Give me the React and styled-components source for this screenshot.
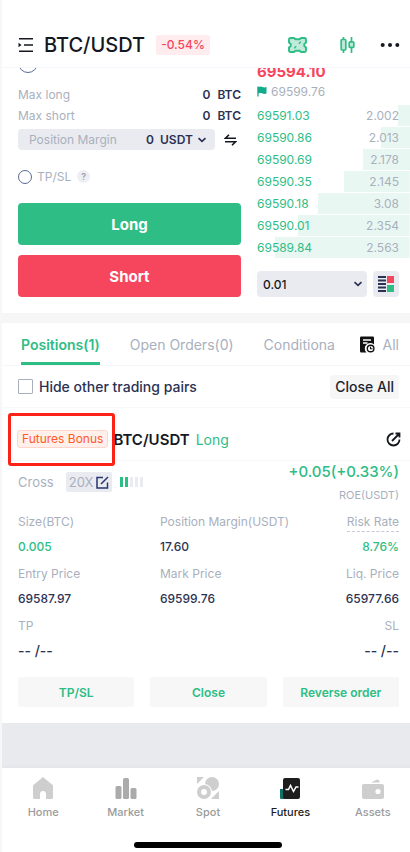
import React from 'react';
import styled, { createGlobalStyle } from 'styled-components';

const GREEN = '#2ebd85';
const RED = '#f6465d';
const NAVY = '#2b3253';
const GREY = '#a9b0bd';

const GlobalStyle = createGlobalStyle`
  * {
    box-sizing: border-box;
  }

  body {
    margin: 0;
    background: #f7f7f7;
    color: ${NAVY};
    font-family: Inter, 'Open Sans', sans-serif;
    font-size: 13px;
  }

  button,
  input,
  select {
    font-family: inherit;
    margin: 0;
  }

  button {
    border: none;
    padding: 0;
    cursor: pointer;
  }
`;

const Page = styled.div`
  display: flex;
  flex-direction: column;
  min-height: 100vh;
  overflow: hidden;
  border-left: 2px solid #f7f7f7;
  background: #e9eaee;
`;

/* Header */
const Header = styled.header`
  display: flex;
  align-items: center;
  height: 68px;
  padding: 22px 10px 0 16px;
  background: #fff;
  border-bottom: 1px solid #f5f6fc;
`;

const Pair = styled.h1`
  margin: 0 11px 0 10px;
  font-size: 20px;
  line-height: 28px;
  font-weight: 500;
  color: #15181f;
`;

const Change = styled.span`
  padding: 0 5px;
  border-radius: 2px;
  background: #feecef;
  color: ${RED};
  font-size: 12px;
  line-height: 20px;
  font-weight: 500;
`;

const HeaderActions = styled.div`
  display: flex;
  align-items: center;
  gap: 25px;
  margin-left: auto;

  button:first-child {
    margin-right: 8px;
  }
`;

const IconButton = styled.button`
  display: flex;
  align-items: center;
  justify-content: center;
  background: none;
  color: #15181f;
`;

/* Order form and order book */
const Trade = styled.section`
  display: grid;
  grid-template-columns: 223fr 153fr;
  gap: 16px;
  padding: 0 0 16px 16px;
  overflow: hidden;
  background: #fff;
`;

const Form = styled.form`
  display: flex;
  flex-direction: column;
`;

const Radio = styled.input`
  appearance: none;
  flex: none;
  width: ${(p) => (p.$large ? 20 : 14)}px;
  height: ${(p) => (p.$large ? 20 : 14)}px;
  border: 1px solid #5a6996;
  border-radius: 50%;
  background: #fff;
`;

const TypeRow = styled.div`
  display: flex;
  height: 31px;
  margin-top: -15px;
`;

const MaxRow = styled.div`
  display: flex;
  justify-content: space-between;
  line-height: 21px;
  color: ${GREY};
  font-size: 12px;

  b {
    color: ${NAVY};
    font-weight: 600;
  }

  span {
    margin-left: 4px;
  }
`;

const MarginRow = styled.div`
  display: flex;
  align-items: center;
  justify-content: space-between;
  gap: 9px;
  padding-right: 4px;
  margin-top: 3px;
`;

const MarginBox = styled.label`
  display: flex;
  align-items: center;
  flex: 1;
  height: 21px;
  padding: 0 8px 0 11px;
  border-radius: 4px;
  background: #eaebf0;
  color: ${GREY};
  font-size: 12px;

  b {
    margin-left: auto;
    color: ${NAVY};
    font-weight: 600;
  }
`;

const SelectWrap = styled.span`
  display: flex;
  align-items: center;
  justify-content: space-between;
  gap: 4px;
  flex: ${(p) => (p.$wide ? 1 : 'none')};
  margin-left: ${(p) => (p.$wide ? 0 : 6)}px;
`;

const Select = styled.select`
  appearance: none;
  flex: ${(p) => (p.$wide ? 1 : 'none')};
  padding: 0;
  border: none;
  background: none;
  color: ${(p) => (p.$wide ? '#15181f' : NAVY)};
  font-size: 12px;
  font-weight: ${(p) => (p.$wide ? 500 : 600)};
`;

const TpslRow = styled.div`
  display: flex;
  align-items: center;
  height: 53px;
  color: ${GREY};
  font-size: 12px;

  label {
    margin: 0 6px 0 5px;
  }
`;

const Help = styled.button`
  width: 13px;
  height: 13px;
  border-radius: 50%;
  background: #eeeff4;
  color: #9aa1b3;
  font-size: 9px;
  line-height: 13px;
  font-weight: 600;
`;

const OrderButton = styled.button`
  height: 42px;
  margin-top: ${(p) => (p.$short ? 10 : 0)}px;
  border-radius: 4px;
  background: ${(p) => (p.$short ? RED : GREEN)};
  color: #fff;
  font-size: 15px;
  font-weight: 700;
`;

const Book = styled.div`
  display: flex;
  flex-direction: column;
`;

const LastPrice = styled.strong`
  margin-top: -6px;
  color: ${RED};
  font-size: 15px;
  line-height: 20px;
  font-weight: 700;
`;

const MarkPrice = styled.div`
  display: flex;
  align-items: center;
  gap: 4px;
  height: 23px;
  padding-bottom: 4px;
  color: ${GREY};
  font-size: 12px;
`;

const Bids = styled.ul`
  margin: 0;
  padding: 0;
  list-style: none;
`;

const Bid = styled.li`
  display: flex;
  justify-content: space-between;
  margin-bottom: 1px;
  padding-right: 11px;
  background: linear-gradient(#e9f7f2, #e9f7f2) right / ${(p) => p.$depth}% 100% no-repeat;
  color: ${GREEN};
  font-size: 12px;
  line-height: 21px;

  span:last-child {
    color: ${GREY};
  }
`;

const BookFooter = styled.div`
  display: flex;
  gap: 6px;
  margin: 12px 11px 0 0;
`;

const StepBox = styled.div`
  display: flex;
  flex: 1;
  height: 26px;
  padding: 0 4px 0 6px;
  border-radius: 4px;
  background: #eaebf0;
`;

const LayoutButton = styled(IconButton)`
  width: 26px;
  height: 26px;
  border-radius: 4px;
  background: #eaebf0;
`;

/* Positions */
const Panel = styled.section`
  border-top: 10px solid #f6f6f7;
  background: #fff;
`;

const Tabs = styled.div`
  display: flex;
  align-items: stretch;
  height: 43px;
  padding: 0 11px 0 19px;
  border-bottom: 1px solid #f5f6fa;
`;

const TabList = styled.div`
  display: flex;
  flex: 1;
  gap: 30px;
  min-width: 0;
  overflow: hidden;
  white-space: nowrap;
`;

const Tab = styled.button`
  flex: none;
  border-top: 3px solid transparent;
  border-bottom: 3px solid ${(p) => (p.$active ? GREEN : 'transparent')};
  background: none;
  color: ${(p) => (p.$active ? GREEN : GREY)};
  font-size: 14px;
  font-weight: ${(p) => (p.$active ? 600 : 400)};
`;

const History = styled(IconButton)`
  gap: 8px;
  margin-left: 18px;
  color: ${GREY};
  font-size: 14px;
`;

const FilterRow = styled.div`
  display: flex;
  align-items: center;
  justify-content: space-between;
  height: 42px;
  padding: 0 11px 0 16px;
  border-bottom: 1px solid #f7f8fb;

  label {
    display: flex;
    align-items: center;
    gap: 6px;
    font-size: 14px;
    font-weight: 500;
  }
`;

const Checkbox = styled.input`
  appearance: none;
  width: 15px;
  height: 15px;
  border: 1px solid #a9b0bd;
  border-radius: 1px;
`;

const CloseAll = styled.button`
  height: 24px;
  padding: 0 5px;
  border-radius: 3px;
  background: #f6f6f7;
  color: #22252e;
  font-size: 14px;
  font-weight: 500;
`;

const PositionHead = styled.div`
  display: flex;
  align-items: center;
  height: 53px;
  padding: 10px 9px 0 6px;
  border-bottom: 1px solid #f7f8fb;

  h2 {
    margin: 0 6px 0 -2px;
    color: #15181f;
    font-size: 15px;
    font-weight: 600;
  }

  button {
    margin-left: auto;
  }
`;

const Side = styled.span`
  color: ${GREEN};
  font-size: 14px;
`;

const Highlight = styled.div`
  position: relative;
  z-index: 1;
  display: flex;
  align-items: center;
  flex: none;
  height: 53px;
  padding: 0 4px 0 6px;
  border: 3px solid #fb2318;
  border-radius: 3px;
`;

const Bonus = styled.span`
  padding: 0 4px;
  border: 1px solid #ffd6c9;
  border-radius: 3px;
  background: #fff0ec;
  color: #ff5a26;
  font-size: 12px;
  line-height: 16px;
`;

const Leverage = styled.div`
  display: flex;
  justify-content: space-between;
  height: 49px;
  padding: 0 11px 0 16px;
`;

const Mode = styled.div`
  display: flex;
  align-items: center;
  height: 42px;
  color: ${GREY};
`;

const LeverageButton = styled(IconButton)`
  gap: 3px;
  height: 20px;
  margin: 0 8px 0 12px;
  padding: 0 3px;
  border-radius: 2px;
  background: #eaebf0;
  color: ${GREY};
  font-size: 13px;
`;

const RiskBars = styled.div`
  display: flex;
  gap: 2px;
`;

const RiskBar = styled.i`
  width: 3px;
  height: 10px;
  background: ${(p) => (p.$on ? GREEN : '#eaebf0')};
`;

const Pnl = styled.div`
  display: flex;
  flex-direction: column;
  align-items: flex-end;
  color: ${GREY};
  font-size: 11px;
  line-height: 24px;

  strong {
    color: ${GREEN};
    font-size: 15px;
    font-weight: 500;
    line-height: 22px;
  }
`;

const Stats = styled.dl`
  display: grid;
  grid-template-columns: 142fr 142fr 97fr;
  row-gap: 4px;
  margin: 0;
  padding: 1px 11px 0 16px;
`;

const Stat = styled.div`
  display: flex;
  flex-direction: column;
  align-items: ${(p) => (p.$end ? 'flex-end' : 'flex-start')};
  grid-column: ${(p) => p.$column || 'auto'};
  white-space: nowrap;

  dt {
    height: 21px;
    margin-bottom: 3px;
    border-bottom: 1px dashed ${(p) => (p.$hint ? '#c6cad4' : 'transparent')};
    color: ${GREY};
    font-size: 12px;
    line-height: 22px;
  }

  dd {
    margin: 0;
    color: ${(p) => (p.$green ? GREEN : NAVY)};
    font-size: ${(p) => (p.$large ? 14 : 12)}px;
    font-weight: 500;
    line-height: 24px;
  }
`;

const Actions = styled.div`
  display: grid;
  grid-template-columns: repeat(3, 1fr);
  gap: 16px;
  padding: 14px 11px 16px 16px;
`;

const Action = styled.button`
  height: 30px;
  border-radius: 2px;
  background: #f7f7f7;
  color: ${GREEN};
  font-size: 12px;
  font-weight: 600;
  white-space: nowrap;
`;

/* Bottom navigation */
const Footer = styled.footer`
  margin: auto -4px 0 0;
  padding-bottom: 4px;
  background: #fff;
  box-shadow: 0 -1px 3px #dfe2e8;
`;

const Nav = styled.nav`
  display: grid;
  grid-template-columns: repeat(5, 1fr);
  height: 74px;
  padding-top: 8px;
`;

const NavItem = styled.a`
  display: flex;
  flex-direction: column;
  align-items: center;
  gap: 4px;
  color: ${(p) => (p.$active ? '#1c1d21' : '#9b9b9b')};
  font-size: 11px;
  font-weight: 500;
  line-height: 16px;
  text-decoration: none;
`;

const HomeBar = styled.div`
  width: 36%;
  height: 6px;
  margin: 0 auto;
  border-radius: 3px;
  background: #000;
`;

function Chevron() {
  return (
    <svg width="10" height="8" viewBox="0 0 10 8" fill="none" stroke={NAVY} strokeWidth="1.7">
      <path d="M1.5 2.2 5 5.4l3.5-3.2" />
    </svg>
  );
}

function MenuIcon() {
  return (
    <svg width="16" height="16" viewBox="0 0 16 16" fill="none" stroke="#15181f" strokeWidth="1.4">
      <path d="M1 1.7h14M6 8h9M1 14.3h14" />
      <path d="M.5 5.8 3.500 8 .5 10.2z" fill="#15181f" stroke="none" />
    </svg>
  );
}

function TicketIcon() {
  return (
    <svg width="19" height="16" viewBox="0 0 19 16" fill="#c0ebda" stroke={GREEN} strokeWidth="1.9" strokeLinejoin="round">
      <path d="M2.500 1h3.500l1.500 1.300h4L13 1h3.500A1.500 1.500 0 0 1 18 2.500v3L16.300 7v2l1.700 1.500v3a1.500 1.500 0 0 1-1.500 1.500H13l-1.500-1.300h-4L6 15H2.500A1.500 1.500 0 0 1 1 13.500v-3L2.700 9V7L1 5.500v-3A1.500 1.500 0 0 1 2.500 1z" />
      <path d="m6.200 11.200 2-2M10.800 6.800l2-2" strokeWidth="1.300" />
    </svg>
  );
}

function CandlesIcon() {
  return (
    <svg width="15" height="16" viewBox="0 0 15 16" fill="#c0ebda" stroke={GREEN} strokeWidth="1.7">
      <path d="M3.5 0v16M11.5 0v16" />
      <rect x="1.2" y="2.5" width="4.6" height="10.5" rx="1" />
      <rect x="9.2" y="4.8" width="4.6" height="5.6" rx="1" />
    </svg>
  );
}

function DotsIcon() {
  return (
    <svg width="20" height="6" viewBox="0 0 20 6" fill="#15181f">
      <circle cx="2.7" cy="3" r="2" />
      <circle cx="10" cy="3" r="2" />
      <circle cx="17.3" cy="3" r="2" />
    </svg>
  );
}

function SwapIcon() {
  return (
    <svg width="13" height="12" viewBox="0 0 13 12" fill="none" stroke="#15181f" strokeWidth="1.6">
      <path d="M5 .7 1.5 4.2H12M1 7.8h10.500L8 11.3" />
    </svg>
  );
}

function FlagIcon() {
  return (
    <svg width="10" height="11" viewBox="0 0 10 11" fill="#12ab8c">
      <path d="M.3.5h1.300v10H.3zM1.500 1c1.500-.8 2.800-.6 4 0s2.500.6 4 0v6.500c-1.500.7-2.800.6-4 0s-2.500-.6-4 0z" />
    </svg>
  );
}

function BookIcon() {
  return (
    <svg width="16" height="16" viewBox="0 0 16 16">
      <path d="M0 1h8M0 4.500h8M0 8h8M0 11.500h8M0 15h8" stroke={NAVY} strokeWidth="1.8" />
      <path d="M9 0h7v7H9z" fill={RED} />
      <path d="M9 9h7v7H9z" fill={GREEN} />
    </svg>
  );
}

function HistoryIcon() {
  return (
    <svg width="15" height="17" viewBox="0 0 15 17">
      <path d="M1.200.500h11.600A1.200 1.200 0 0 1 14 1.700v6.800a5 5 0 0 0-7.500 8H1.200A1.200 1.200 0 0 1 0 15.300V1.700A1.200 1.200 0 0 1 1.200.500z" fill="#111" />
      <path d="M3 4h8M3 7h4.500" stroke="#fff" strokeWidth="1.300" />
      <circle cx="10.600" cy="12.500" r="4" fill="#111" />
      <circle cx="10.600" cy="12.500" r="2.600" fill="#fff" />
      <path d="M10.500 10.700v2h2" fill="none" stroke="#111" strokeWidth="1.100" />
    </svg>
  );
}

function ShareIcon() {
  return (
    <svg width="15" height="15" viewBox="0 0 15 15" fill="none" stroke="#15181f" strokeWidth="1.8">
      <path d="M7.500 1.500a6 6 0 1 0 6 6M6 9l7-7M9.500 1.500h4V5.500" />
    </svg>
  );
}

function EditIcon() {
  return (
    <svg width="13" height="13" viewBox="0 0 13 13" fill="none" stroke="#26366e" strokeWidth="1.5">
      <path d="M7 1.500H1v10.500h10.500V6.500M5 8l7-7" />
    </svg>
  );
}

function HomeIcon() {
  return (
    <svg width="22" height="24" viewBox="0 0 22 24" fill="#cecece">
      <path d="M11 1 20 8.500a2 2 0 0 1 1 1.500v11.500a1.500 1.500 0 0 1-1.500 1.500H14v-5a3 3 0 0 0-6 0v5H2.500A1.500 1.500 0 0 1 1 21.500V10a2 2 0 0 1 1-1.500z" />
    </svg>
  );
}

function MarketIcon() {
  return (
    <svg width="22" height="24" viewBox="0 0 22 24" fill="#ababab">
      <rect x="0.500" y="10" width="6" height="13" rx="1.5" />
      <rect x="8" y="2" width="6" height="21" rx="1.5" />
      <rect x="15.500" y="12" width="6" height="11" rx="1.5" />
    </svg>
  );
}

function SpotIcon() {
  return (
    <svg width="24" height="24" viewBox="0 0 24 24" fill="#cecece">
      <path d="M1 1h7L1 8zM23 23h-8l8-8z" />
      <circle cx="16" cy="8" r="7" />
      <circle cx="8" cy="16" r="8" fill="#fff" />
      <circle cx="8" cy="16" r="5" fill="#fff" stroke="#cecece" strokeWidth="4" />
    </svg>
  );
}

function FuturesIcon() {
  return (
    <svg width="22" height="24" viewBox="0 0 22 24">
      <path d="M1 13h5v10H2a1 1 0 0 1-1-1z" fill="#11706a" />
      <rect x="4" y="2" width="17" height="21" rx="2" fill="#1d1d1d" />
      <path d="M6.500 13.500h3l2-4 3 6 2.500-4.500h2.500" fill="none" stroke="#fff" strokeWidth="1.500" />
    </svg>
  );
}

function AssetsIcon() {
  return (
    <svg width="22" height="24" viewBox="0 0 22 24" fill="#cecece">
      <path d="M9 6.500l5.500-2.800a2 2 0 0 1 2.500.8l.8 2z" />
      <path d="M2 8h18a2 2 0 0 1 2 2v11a2 2 0 0 1-2 2H2a2 2 0 0 1-2-2V10a2 2 0 0 1 2-2z" />
      <circle cx="16" cy="15.500" r="2.600" fill="#fff" />
    </svg>
  );
}

const bids = [
  { price: '69591.03', amount: '2.002', depth: 8 },
  { price: '69590.86', amount: '2.013', depth: 19 },
  { price: '69590.69', amount: '2.178', depth: 31 },
  { price: '69590.35', amount: '2.145', depth: 43 },
  { price: '69590.18', amount: '3.08', depth: 60 },
  { price: '69590.01', amount: '2.354', depth: 73 },
  { price: '69589.84', amount: '2.563', depth: 88 },
];

const navItems = [
  { label: 'Home', Icon: HomeIcon },
  { label: 'Market', Icon: MarketIcon },
  { label: 'Spot', Icon: SpotIcon },
  { label: 'Futures', Icon: FuturesIcon, active: true },
  { label: 'Assets', Icon: AssetsIcon },
];

export default function App() {
  return (
    <>
      <GlobalStyle />
      <Page>
        <Header>
          <IconButton aria-label="Menu"><MenuIcon /></IconButton>
          <Pair>BTC/USDT</Pair>
          <Change>-0.54%</Change>
          <HeaderActions>
            <IconButton aria-label="Coupons"><TicketIcon /></IconButton>
            <IconButton aria-label="Chart"><CandlesIcon /></IconButton>
            <IconButton aria-label="More"><DotsIcon /></IconButton>
          </HeaderActions>
        </Header>

        <Trade>
          <Form onSubmit={(e) => e.preventDefault()}>
            <TypeRow>
              <Radio type="radio" name="amount" aria-label="Amount" $large />
            </TypeRow>
            <MaxRow>Max long <b>0 <span>BTC</span></b></MaxRow>
            <MaxRow>Max short <b>0 <span>BTC</span></b></MaxRow>
            <MarginRow>
              <MarginBox>
                Position Margin <b>0</b>
                <SelectWrap>
                  <Select aria-label="Margin currency"><option>USDT</option></Select>
                  <Chevron />
                </SelectWrap>
              </MarginBox>
              <IconButton type="button" aria-label="Switch"><SwapIcon /></IconButton>
            </MarginRow>
            <TpslRow>
              <Radio type="radio" name="tpsl" id="tpsl" />
              <label htmlFor="tpsl">TP/SL</label>
              <Help type="button">?</Help>
            </TpslRow>
            <OrderButton type="submit">Long</OrderButton>
            <OrderButton type="submit" $short>Short</OrderButton>
          </Form>

          <Book>
            <LastPrice>69594.10</LastPrice>
            <MarkPrice><FlagIcon />69599.76</MarkPrice>
            <Bids>
              {bids.map((bid) => (
                <Bid key={bid.price} $depth={bid.depth}>
                  <span>{bid.price}</span>
                  <span>{bid.amount}</span>
                </Bid>
              ))}
            </Bids>
            <BookFooter>
              <StepBox>
                <SelectWrap $wide>
                  <Select aria-label="Price step" $wide><option>0.01</option></Select>
                  <Chevron />
                </SelectWrap>
              </StepBox>
              <LayoutButton aria-label="Book layout"><BookIcon /></LayoutButton>
            </BookFooter>
          </Book>
        </Trade>

        <Panel>
          <Tabs>
            <TabList>
              <Tab $active>Positions(1)</Tab>
              <Tab>Open Orders(0)</Tab>
              <Tab>Conditiona</Tab>
            </TabList>
            <History><HistoryIcon />All</History>
          </Tabs>

          <FilterRow>
            <label>
              <Checkbox type="checkbox" />
              Hide other trading pairs
            </label>
            <CloseAll>Close All</CloseAll>
          </FilterRow>

          <PositionHead>
            <Highlight><Bonus>Futures Bonus</Bonus></Highlight>
            <h2>BTC/USDT</h2>
            <Side>Long</Side>
            <IconButton aria-label="Share"><ShareIcon /></IconButton>
          </PositionHead>

          <Leverage>
            <Mode>
              Cross
              <LeverageButton>20X<EditIcon /></LeverageButton>
              <RiskBars>
                <RiskBar $on />
                <RiskBar $on />
                <RiskBar />
                <RiskBar />
                <RiskBar />
              </RiskBars>
            </Mode>
            <Pnl>
              <strong>+0.05(+0.33%)</strong>
              ROE(USDT)
            </Pnl>
          </Leverage>

          <Stats>
            <Stat $green><dt>Size(BTC)</dt><dd>0.005</dd></Stat>
            <Stat><dt>Position Margin(USDT)</dt><dd>17.60</dd></Stat>
            <Stat $end $green $hint><dt>Risk Rate</dt><dd>8.76%</dd></Stat>
            <Stat><dt>Entry Price</dt><dd>69587.97</dd></Stat>
            <Stat><dt>Mark Price</dt><dd>69599.76</dd></Stat>
            <Stat $end><dt>Liq. Price</dt><dd>65977.66</dd></Stat>
            <Stat $large><dt>TP</dt><dd>-- /--</dd></Stat>
            <Stat $end $large $column={3}><dt>SL</dt><dd>-- /--</dd></Stat>
          </Stats>

          <Actions>
            <Action>TP/SL</Action>
            <Action>Close</Action>
            <Action>Reverse order</Action>
          </Actions>
        </Panel>

        <Footer>
          <Nav>
            {navItems.map(({ label, Icon, active }) => (
              <NavItem key={label} href="#" $active={active}>
                <Icon />
                {label}
              </NavItem>
            ))}
          </Nav>
          <HomeBar />
        </Footer>
      </Page>
    </>
  );
}
